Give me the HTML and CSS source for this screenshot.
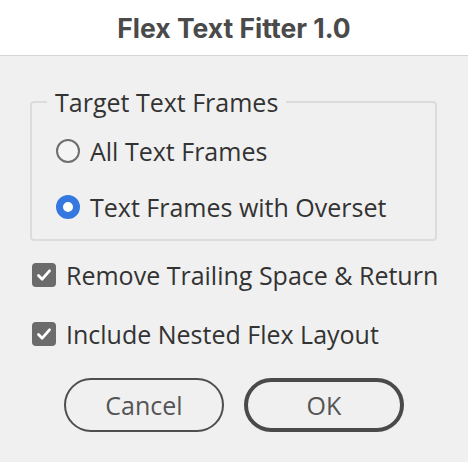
FILE: index.html
```html
<!DOCTYPE html>
<html>
<head>
<meta charset="utf-8">
<link rel="stylesheet" href="styles.css">
</head>
<body>
<div class="dialog">
  <header class="titlebar">Flex Text Fitter 1.0</header>
  <main class="content">
    <fieldset class="group">
      <legend class="legend">Target Text Frames</legend>
      <div class="option">
        <span class="radio"></span>
        <span class="label">All Text Frames</span>
      </div>
      <div class="option">
        <span class="radio checked"></span>
        <span class="label">Text Frames with Overset</span>
      </div>
    </fieldset>
    <div class="check-row first">
      <span class="checkbox"><svg viewBox="0 0 24 24" width="24" height="24"><path d="M6.5 12.5 L10.2 16.2 L17.5 7.8" fill="none" stroke="#fff" stroke-width="2.8" stroke-linecap="round" stroke-linejoin="round"/></svg></span>
      <span class="label">Remove Trailing Space &amp; Return</span>
    </div>
    <div class="check-row">
      <span class="checkbox"><svg viewBox="0 0 24 24" width="24" height="24"><path d="M6.5 12.5 L10.2 16.2 L17.5 7.8" fill="none" stroke="#fff" stroke-width="2.8" stroke-linecap="round" stroke-linejoin="round"/></svg></span>
      <span class="label">Include Nested Flex Layout</span>
    </div>
    <div class="buttons">
      <button class="btn">Cancel</button>
      <button class="btn primary">OK</button>
    </div>
  </main>
</div>
</body>
</html>
```
FILE: styles.css
```css
html, body {
  margin: 0;
  padding: 0;
  background: #f0f0f0;
}
.dialog {
  width: 468px;
  height: 462px;
  background: #f0f0f0;
  font-family: "Open Sans", "Noto Sans", sans-serif;
  color: #333;
}
.titlebar {
  height: 56px;
  box-sizing: border-box;
  background: #fff;
  border-bottom: 1px solid #d4d4d4;
  display: flex;
  align-items: center;
  justify-content: center;
  font-family: "Inter", "Liberation Sans", sans-serif;
  font-weight: 700;
  font-size: 26.5px;
  color: #4a4a4a;
  padding-top: 1px;
}
.content {
  padding: 33px 31px 0 30px;
}
.group {
  margin: 0;
  border: 2px solid #dcdcdc;
  border-radius: 4px;
  padding: 21px 10px 17px 24px;
  box-sizing: border-box;
  display: flex;
  flex-direction: column;
  gap: 25.5px;
}
.legend {
  padding: 0 8px;
  margin-left: -9px;
  font-size: 25px;
  line-height: 26px;
  color: #333;
}
.option {
  display: flex;
  align-items: center;
  height: 30px;
}
.radio {
  width: 24px;
  height: 24px;
  box-sizing: border-box;
  border: 2px solid #6e6e6e;
  border-radius: 50%;
  background: #f4f4f4;
  flex: none;
}
.radio.checked {
  border: 7.5px solid #3478e0;
  background: #fff;
}
.label {
  font-size: 25px;
  line-height: 30px;
  margin-left: 10px;
  white-space: nowrap;
}
.check-row {
  display: flex;
  align-items: center;
  height: 30px;
  margin-top: 28.5px;
  padding-left: 2px;
}
.check-row.first {
  margin-top: 19.5px;
}
.checkbox {
  width: 24px;
  height: 24px;
  border-radius: 4px;
  background: #6b6b6b;
  flex: none;
  display: flex;
}
.buttons {
  display: flex;
  justify-content: center;
  gap: 20px;
  margin-top: 29px;
  margin-left: -30px;
  margin-right: -31px;
}
.btn {
  width: 160px;
  height: 54px;
  border-radius: 27px;
  background: transparent;
  border: 2px solid #4e4e4e;
  font-family: "Open Sans", "Noto Sans", sans-serif;
  font-size: 25px;
  color: #555;
  padding: 0;
}
.btn.primary {
  border: 4px solid #4a4a4a;
  color: #555;
}
```
